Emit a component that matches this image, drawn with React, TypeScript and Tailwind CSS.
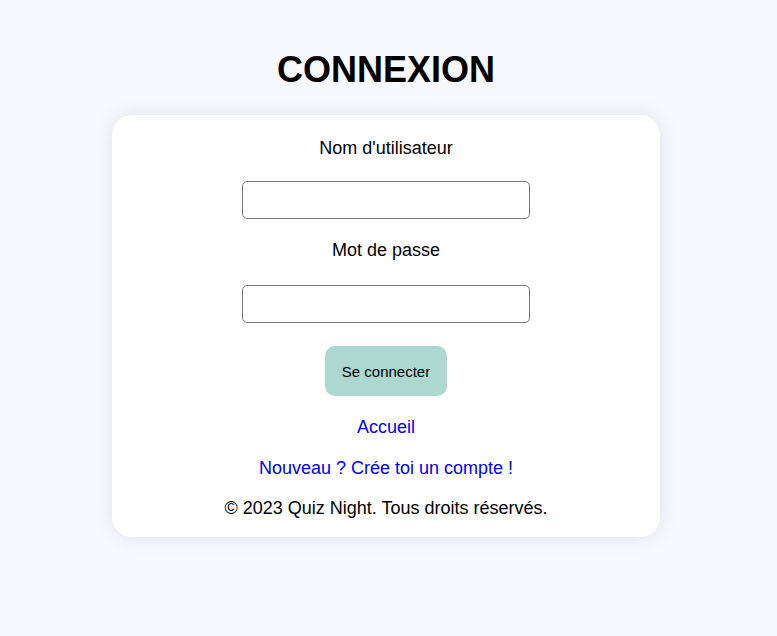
export default function App() {
  return (
    <div className="min-h-screen bg-[#f8f8ff] flex flex-col items-center pt-[49px] pr-[5px] font-['Liberation_Sans',Arial,sans-serif] text-black">
      <h1 className="text-[36px] leading-[41px] font-bold">CONNEXION</h1>

      <div className="mt-[25px] w-[548px] bg-white rounded-[20px] shadow-[0_0_20px_rgba(0,0,0,0.1)] flex flex-col items-center pt-[23px] pb-[18px]">
        <label className="text-[18px] leading-[21px]">Nom d'utilisateur</label>
        <input
          type="text"
          className="mt-[22px] w-[288px] h-[38px] border border-[#767676] rounded-[5px] bg-white outline-none px-2"
        />

        <label className="mt-[21px] text-[18px] leading-[21px]">Mot de passe</label>
        <input
          type="password"
          className="mt-[24px] w-[288px] h-[38px] border border-[#767676] rounded-[5px] bg-white outline-none px-2"
        />

        <button className="mt-[23px] h-[50px] px-[17px] rounded-[10px] bg-[#acd8cf] text-[15px] leading-[17px]">
          Se connecter
        </button>

        <a href="#" className="mt-[21px] text-[18px] leading-[21px] text-[#0000ee]">
          Accueil
        </a>

        <a href="#" className="mt-[20px] text-[18px] leading-[21px] text-[#0000ee]">
          Nouveau ? Crée toi un compte !
        </a>

        <p className="mt-[19px] text-[18px] leading-[21px]">© 2023 Quiz Night. Tous droits réservés.</p>
      </div>
    </div>
  )
}
